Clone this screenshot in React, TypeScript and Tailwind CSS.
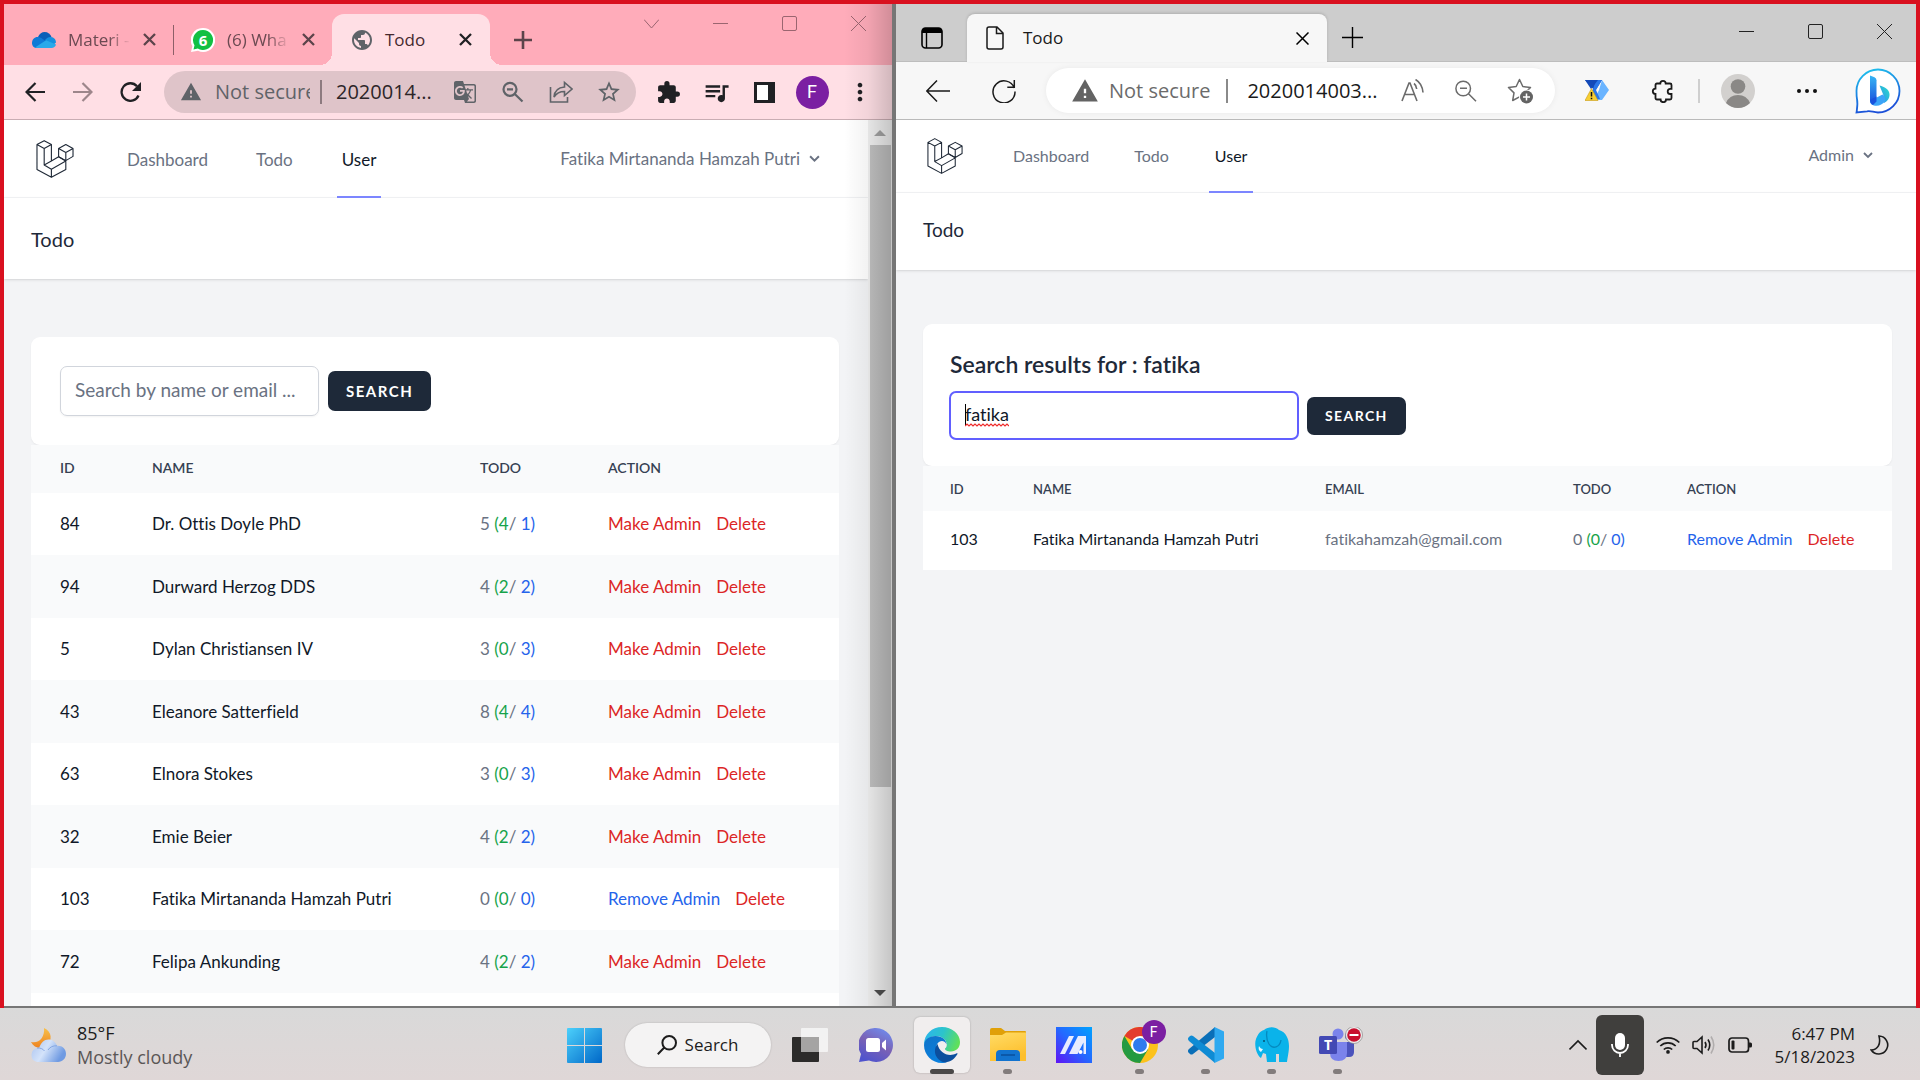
import React from 'react';
import { MdExtension, MdGTranslate, MdPublic, MdQueueMusic, MdStarBorder, MdWarning, MdMoreVert } from 'react-icons/md';

type IconProps = { className?: string };

function Stroke({ d, className, w = 1.5, box = 24 }: { d: string; className?: string; w?: number; box?: number }) {
  return (
    <svg viewBox={`0 0 ${box} ${box}`} className={className} fill="none" stroke="currentColor" strokeWidth={w} aria-hidden="true">
      <path d={d} />
    </svg>
  );
}

function Logo({ className }: IconProps) {
  return (
    <svg viewBox="0 0 114 116" className={className} fill="none" stroke="#1f2937" strokeWidth="3.4" strokeLinejoin="round" aria-hidden="true">
      <path d="M2 14 24 2l22 12-22 12zM2 14v76l44 24 44-24V64M24 26v50l22 13 44-25-22-13L46 64V14M46 89v25M24 76l22-12" />
      <path d="M68 26 90 14l22 12v24L90 63 68 51zM68 26l22 12 22-12M90 38v25" />
    </svg>
  );
}

function WindowControls({ chevron, className }: { chevron?: boolean; className: string }) {
  return (
    <div className={`flex h-[15px] items-center gap-[54px] ${className}`}>
      {chevron && <button aria-label="Search tabs"><Stroke box={15} w={1} d="M0 3.5 7.5 12 15 3.5" className="size-[15px]" /></button>}
      <button aria-label="Minimize"><Stroke box={15} w={1} d="M0 7.5h15" className="size-[15px]" /></button>
      <button aria-label="Maximize">
        <svg viewBox="0 0 15 15" className="size-[15px]" fill="none" stroke="currentColor" aria-hidden="true"><rect x=".5" y=".5" width="14" height="14" rx="1.500" /></svg>
      </button>
      <button aria-label="Close"><Stroke box={15} w={1} d="M0 0 15 15M15 0 0 15" className="size-[15px]" /></button>
    </div>
  );
}

function CloudIcon() {
  return (
    <svg viewBox="0 0 24 16" className="h-4 w-6 shrink-0" aria-hidden="true">
      <path d="M6 5C7.500 1.500 10 0 12.500 0c3.500 0 6 2 7 5l-7 6z" fill="#0a5fb8" />
      <path d="M0 11c0-3.500 2.500-6 5.500-6 2 0 3 .5 4.500 1.500L15 10l-9 6H5c-3 0-5-2-5-5z" fill="#0f7ad6" />
      <path d="M13 8c2-2.500 4-3.300 6-3 3 .3 5 2.700 5 5.500L20 14z" fill="#1490df" />
      <path d="M3 15.500 14 8.300l10 4.200c-.5 2-2.300 3.500-4.500 3.500H5c-.8 0-1.300-.2-2-.5z" fill="#29a9ea" />
    </svg>
  );
}

function ChatBadge() {
  return (
    <svg viewBox="0 0 24 24" className="size-6 shrink-0" aria-hidden="true">
      <path d="M12 0a12 12 0 1 1-5 22.800L0 24l1.400-6A12 12 0 0 1 12 0z" fill="#fff" />
      <path d="M12 2a10 10 0 1 1-5.200 18.500L2.500 21.500l1-4.300A10 10 0 0 1 12 2z" fill="#12c043" />
      <text x="12" y="17.500" fontSize="15" fontWeight="700" fill="#fff" textAnchor="middle" fontFamily="Open Sans">6</text>
    </svg>
  );
}

function ChromeTab({ icon, title, active }: { icon: React.ReactNode; title: string; active?: boolean }) {
  return (
    <div
      className={
        active
          ? "relative flex h-full w-[158px] items-center rounded-t-xl bg-[#ffdfe5] px-[18px] text-[#45292f] before:absolute before:bottom-0 before:-left-3 before:size-3 before:bg-[radial-gradient(circle_at_0_0,transparent_12px,#ffdfe5_12px)] before:content-[''] after:absolute after:-right-3 after:bottom-0 after:size-3 after:bg-[radial-gradient(circle_at_100%_0,transparent_12px,#ffdfe5_12px)] after:content-['']"
          : 'flex h-full w-[158px] items-center px-[17px] text-[#6c4a52]'
      }
    >
      <span className="flex w-6 shrink-0 justify-center">{icon}</span>
      <span className={active ? 'ml-[11px] flex-1 text-[17px]' : 'ml-3 flex-1 text-[17px] whitespace-nowrap [mask-image:linear-gradient(to_right,black_65%,transparent)]'}>{title}</span>
      <button aria-label={`Close ${title}`} className={active ? 'ml-2 text-[#202124]' : 'ml-3 text-[#5c434a]'}>
        <Stroke box={13} w={2.300} d="M1 1l11 11M12 1 1 12" className="size-[13px]" />
      </button>
    </div>
  );
}

function ChromeBar() {
  const slot = 'flex w-12 shrink-0 items-center justify-center';
  return (
    <header className="shrink-0 font-['Open_Sans',sans-serif]">
      <div className="flex h-[61px] bg-[#ffacba] pt-[10px] pl-[11px]">
        <ChromeTab icon={<CloudIcon />} title="Materi -" />
        <div className="h-[30px] w-px self-center bg-[#8d5f68]" />
        <ChromeTab icon={<ChatBadge />} title="(6) Wha" />
        <ChromeTab active icon={<MdPublic className="size-[26px] text-[#5f6368]" />} title="Todo" />
        <button aria-label="New tab" className="ml-6 self-center text-[#5c434a]">
          <Stroke box={18} w={2.600} d="M9 0v18M0 9h18" className="size-[18px]" />
        </button>
        <WindowControls chevron className="mt-[2px] mr-[26px] ml-auto text-[#9a6570]" />
      </div>
      <div className="flex h-[55px] items-center border-b border-[#c9adb3] bg-[#ffdfe5] pr-2 pl-[7px] text-[#202124]">
        <button aria-label="Back" className={slot}><Stroke box={20} w={2.200} d="M20 10H2M10.500 1 1.500 10l9 9" className="size-5" /></button>
        <button aria-label="Forward" className={`${slot} text-[#9d868b]`}><Stroke box={20} w={2.200} d="M0 10h18M9.500 1l9 9-9 9" className="size-5" /></button>
        <button aria-label="Reload" className={slot}>
          <svg viewBox="0 0 22 20" className="h-5 w-[22px]" fill="none" aria-hidden="true">
            <path d="M18.500 13.500A8.800 8.800 0 1 1 17 4.200" stroke="currentColor" strokeWidth="2.300" /><path d="M21 0v9h-9z" fill="currentColor" />
          </svg>
        </button>
        <div className="mr-2 ml-[9px] flex h-[42px] min-w-0 flex-1 items-center rounded-full bg-[#dfc4c9] pr-[3px] pl-4 text-xl text-[#5f6368]">
          <MdWarning className="size-[22px] shrink-0" />
          <span className="ml-[13px] w-[95px] shrink-0 overflow-hidden whitespace-nowrap">Not secure</span>
          <span className="mx-[10px] h-6 w-[2px] shrink-0 bg-[#8d7a7f]" />
          <input aria-label="Address" readOnly value="2020014..." className="ml-1 w-0 min-w-0 flex-1 bg-transparent text-[#2c2528] outline-none" />
          <button aria-label="Translate" className={slot}><MdGTranslate className="size-6" /></button>
          <button aria-label="Zoom" className={slot}><Stroke box={22} w={2.200} d="M14.500 8.300a6.500 6.500 0 1 1-13 0 6.500 6.500 0 0 1 13 0zM12.800 13l7.700 7.500M5 8.300h6" className="size-[22px]" /></button>
          <button aria-label="Share" className={slot}><Stroke box={24} w={1.600} d="M1.500 7v15h17v-5M5 17c.5-6 4-9.500 10.500-10V2.500L23 9l-7.500 6.500V11.500C11 11.500 7.500 13 5 17z" className="size-6" /></button>
          <button aria-label="Bookmark" className={slot}><MdStarBorder className="size-[26px]" /></button>
        </div>
        <button aria-label="Extensions" className={slot}><MdExtension className="size-[25px]" /></button>
        <button aria-label="Media" className={slot}><MdQueueMusic className="size-[29px]" /></button>
        <button aria-label="Side panel" className={slot}><span className="h-[21px] w-[21px] border-[3px] border-r-[7px] border-[#202124] bg-white" /></button>
        <button aria-label="Profile" className={slot}><span className="flex size-[33px] items-center justify-center rounded-full bg-[#7b1fa2] font-['Roboto'] text-lg text-white">F</span></button>
        <button aria-label="Menu" className={slot}><MdMoreVert className="size-7" /></button>
      </div>
    </header>
  );
}

function EdgeBar() {
  return (
    <header className="shrink-0 font-['Open_Sans',sans-serif]">
      <div className="flex h-[58px] border-b border-[#bdbdbd] bg-[#cdcdcd] pt-[10px] pl-[25px]">
        <button aria-label="Tab actions" className="mr-6 self-center">
          <svg viewBox="0 0 22 22" className="size-[22px]" fill="none" aria-hidden="true">
            <rect x="1" y="1" width="20" height="20" rx="3.500" stroke="#000" strokeWidth="1.600" /><path d="M1 6V4q0-3 3-3h14q3 0 3 3v2z" fill="#000" /><path d="M5.500 6v15" stroke="#000" strokeWidth="1.400" />
          </svg>
        </button>
        <div className="relative -mb-px flex w-[360px] items-center rounded-t-lg bg-[#f7f7f7] pr-[18px] pl-[19px] shadow-[0_-1px_3px_rgba(0,0,0,0.15)]">
          <svg viewBox="0 0 18 24" className="h-6 w-[18px]" fill="none" stroke="#1a1a1a" strokeWidth="1.500" aria-hidden="true">
            <path d="M1 3q0-2 2-2h8l6 6v14q0 2-2 2H3q-2 0-2-2zM10.500 1v6.500H17" />
          </svg>
          <span className="ml-[19px] flex-1 text-[17px] text-[#1a1a1a]">Todo</span>
          <button aria-label="Close tab"><Stroke box={13} w={1.500} d="M.5.5l12 12M12.500.5l-12 12" className="size-[13px]" /></button>
        </div>
        <button aria-label="New tab" className="ml-[15px] self-center"><Stroke box={21} w={1.400} d="M10.500 0v21M0 10.500h21" className="size-[21px]" /></button>
        <WindowControls className="mt-[10px] mr-6 ml-auto text-[#222]" />
      </div>
      <div className="flex h-[58px] items-center border-b border-[#bababa] bg-[#f7f7f7] pr-[15px] pl-[30px] text-[#1a1a1a]">
        <button aria-label="Back"><Stroke d="M24 12H1M11 1.500.8 12 11 22.500" className="size-6" /></button>
        <button aria-label="Refresh" className="ml-[42px]"><Stroke d="M22.300 9A11 11 0 1 0 23 12.500M22.300 1v7.200h-7" className="size-6" /></button>
        <div className="ml-[30px] flex h-[45px] min-w-0 flex-1 items-center rounded-full bg-white pr-[22px] pl-[25px] text-xl text-[#6b6b6b] shadow-[0_0_6px_rgba(0,0,0,0.06)]">
          <MdWarning className="size-7 shrink-0 text-[#636363]" />
          <span className="ml-[10px] shrink-0 whitespace-nowrap">Not secure</span>
          <span className="mx-4 h-6 w-[2px] shrink-0 bg-[#8a8a8a]" />
          <input aria-label="Address" readOnly value="2020014003..." className="ml-[3px] w-0 min-w-0 flex-1 bg-transparent text-[#1a1a1a] outline-none" />
          <button aria-label="Read aloud" className="ml-4"><Stroke w={1.600} d="M1 22 8 4h1l7 18M3.700 15.500h9.600M13 4.500c2 1.500 2.500 3.300 2.700 5.500M14.500.5c4.500 2.500 7 7 7.500 13" className="size-6" /></button>
          <button aria-label="Zoom out" className="ml-[30px]"><Stroke box={22} w={1.500} d="M15.500 8.500a7.300 7.300 0 1 1-14.600 0 7.300 7.300 0 0 1 14.600 0zM13.500 13.700l7.500 7.500M5 8.200h7" className="size-[22px]" /></button>
          <button aria-label="Add to favorites" className="ml-[30px]">
            <svg viewBox="0 0 26 26" className="size-[26px]" fill="none" aria-hidden="true">
              <path d="m12.500 1.500 3.300 7 7.700 1-5.600 5.400 1.300 7.600-6.700-3.700-6.800 3.700 1.300-7.600L1.500 9.500l7.700-1z" stroke="#6b6b6b" strokeWidth="1.500" strokeLinejoin="round" />
              <circle cx="19.500" cy="19" r="7.500" fill="#fff" /><circle cx="19.500" cy="19" r="6.500" fill="#636363" /><path d="M19.500 15.500v7M16 19h7" stroke="#fff" strokeWidth="1.500" />
            </svg>
          </button>
        </div>
        <button aria-label="Power Automate" className="ml-[30px]">
          <svg viewBox="0 0 24 22" className="h-[22px] w-6" aria-hidden="true">
            <path d="M0 0h17l-7 11z" fill="#1349b8" /><path d="M17 0 24 10 17 20H9l5-10z" fill="#6ab4ff" /><path d="M11 0h6l-6 10 4 9H9L3 20 8 9z" fill="#2b77e8" /><path d="M0 0h13L6 9z" fill="#1349b8" />
            <path d="M6.500 8.500 13 20.500H0z" fill="#f7cf33" stroke="#c99a10" strokeWidth=".6" /><path d="M6.500 12v4.500M6.500 17.700v1.500" stroke="#111" strokeWidth="1.500" />
          </svg>
        </button>
        <button aria-label="Extensions" className="ml-[42px]"><Stroke w={1.800} d="M9.300 4.500a2.700 2.700 0 0 1 5.400 0H19q1.500 0 1.500 1.500v3.800h-1.200a2.600 2.600 0 0 0 0 5.200h1.200V19q0 1.500-1.500 1.500h-4a2.700 2.700 0 0 1-5.400 0H6q-1.500 0-1.500-1.500v-4a2.700 2.700 0 0 1 0-5.400V6q0-1.500 1.500-1.500z" className="size-6" /></button>
        <span className="ml-[23px] h-6 w-[2px] bg-[#cfcfcf]" />
        <button aria-label="Profile" className="ml-[21px]">
          <svg viewBox="0 0 34 34" className="size-[34px]" aria-hidden="true">
            <circle cx="17" cy="17" r="17" fill="#d2d0ce" /><circle cx="17" cy="12.500" r="7.300" fill="#8a8886" /><path d="M5 29a13 13 0 0 1 24 0 17 17 0 0 1-24 0z" fill="#8a8886" />
          </svg>
        </button>
        <button aria-label="Settings" className="ml-[42px] flex gap-1"><i className="size-1 rounded-full bg-[#111]" /><i className="size-1 rounded-full bg-[#111]" /><i className="size-1 rounded-full bg-[#111]" /></button>
        <button aria-label="Bing chat" className="ml-[38px]">
          <svg viewBox="0 0 46 46" className="size-[46px]" aria-hidden="true">
            <defs>
              <linearGradient id="ring" x1="0" y1="0" x2=".3" y2="1"><stop stopColor="#1ec8ee" /><stop offset="1" stopColor="#1b4fd8" /></linearGradient>
              <linearGradient id="bee" x1="0" y1="0" x2="0" y2="1"><stop stopColor="#36b6f5" /><stop offset="1" stopColor="#1a52dc" /></linearGradient>
              <linearGradient id="swash" x1="0" y1="1" x2="1" y2="0"><stop stopColor="#2a8bf2" /><stop offset="1" stopColor="#2be0c8" /></linearGradient>
            </defs>
            <path d="M23 1.500a21.500 21.500 0 1 1 0 43c-5-.2-7-2-11-1.200L1.500 44.500C2.500 38 3 36 2 31c-.5-2.500-.5-5-.5-8A21.500 21.500 0 0 1 23 1.500z" fill="#fff" stroke="url(#ring)" strokeWidth="1.800" />
            <path d="m15 7.500 4.500 1.800q2 1 2 3v19L15 34.500z" fill="url(#bee)" />
            <path d="M24.500 17.500c5 1.500 9.500 3.500 10 8.500.3 4.500-2 7-5.500 9l-2-5 2-1.500z" fill="url(#swash)" />
            <path d="M15 33 27.500 26.500c2 1 3.500 4 2.500 7-2.500 2.500-5 4.300-8.500 4.300-4 0-6.500-2-6.500-4.800z" fill="#3ba4f8" /><path d="m15 32 6.500-3.500v5L18 37q-3-1.500-3-5z" fill="#1a52dc" />
          </svg>
        </button>
      </div>
    </header>
  );
}

type User = { id: number; name: string; email?: string; counts: [number, number, number]; admin?: boolean };

const users: User[] = [
  { id: 84, name: 'Dr. Ottis Doyle PhD', counts: [5, 4, 1] },
  { id: 94, name: 'Durward Herzog DDS', counts: [4, 2, 2] },
  { id: 5, name: 'Dylan Christiansen IV', counts: [3, 0, 3] },
  { id: 43, name: 'Eleanore Satterfield', counts: [8, 4, 4] },
  { id: 63, name: 'Elnora Stokes', counts: [3, 0, 3] },
  { id: 32, name: 'Emie Beier', counts: [4, 2, 2] },
  { id: 103, name: 'Fatika Mirtananda Hamzah Putri', counts: [0, 0, 0], admin: true },
  { id: 72, name: 'Felipa Ankunding', counts: [4, 2, 2] },
];

function TodoCount({ counts }: { counts: [number, number, number] }) {
  return (
    <>
      {counts[0]} <span className="text-[#16a34a]">({counts[1]}</span>/ <span className="text-[#2563eb]">{counts[2]})</span>
    </>
  );
}

function Actions({ admin, gap }: { admin?: boolean; gap: string }) {
  return (
    <div className={`flex whitespace-nowrap ${gap}`}>
      {admin ? <button className="text-[#2563eb]">Remove Admin</button> : <button className="text-[#dc2626]">Make Admin</button>}
      <button className="text-[#dc2626]">Delete</button>
    </div>
  );
}

function Chevron({ className }: IconProps) {
  return <Stroke box={10} w={1.800} d="M1 3l4 4 4-4" className={className} />;
}

function LeftPage() {
  return (
    <div className="flex min-h-0 flex-1 font-['Lato',sans-serif] [font-variant-ligatures:none]">
      <div className="min-w-0 flex-1 overflow-hidden bg-gray-100">
        <nav className="flex h-[78px] border-b border-gray-100 bg-white pr-[48px] pl-8 text-[17px] text-gray-500">
          <Logo className="mt-[20px] size-[38px]" />
          <div className="ml-[49px] flex gap-[38px]">
            <a href="#dashboard" className="flex items-center px-[4px] pt-[3px]">Dashboard</a>
            <a href="#todo" className="flex items-center px-[6px] pt-[3px]">Todo</a>
            <a href="#user" className="-mb-px flex items-center border-b-2 border-indigo-400 px-[5px] pt-[3px] text-gray-900">User</a>
          </div>
          <button className="ml-auto flex items-center gap-[9px]">Fatika Mirtananda Hamzah Putri <Chevron className="size-[11px]" /></button>
        </nav>
        <div className="flex h-[81px] items-center bg-white px-[27px] shadow"><h2 className="text-xl text-gray-800">Todo</h2></div>
        <main className="px-[27px] pr-[29px] pt-[58px]">
          <form className="flex h-[108px] items-center gap-[9px] rounded-[9px] bg-white px-[29px] shadow-xs">
            <input aria-label="Search users" placeholder="Search by name or email ..." className="h-[50px] w-[259px] rounded-[7px] border border-gray-300 px-[14px] pb-[3px] text-[19px] shadow-xs placeholder:text-gray-500" />
            <button type="button" className="h-10 rounded-[7px] bg-gray-800 px-[18px] text-[15px] font-bold tracking-widest text-white uppercase">Search</button>
          </form>
          <table className="w-full table-fixed text-left text-[17px] text-gray-500">
            <thead className="bg-gray-50 text-sm text-gray-700 uppercase">
              <tr className="h-12">
                <th className="w-[92px] px-[29px] pb-[3px] font-semibold">Id</th>
                <th className="px-[29px] pb-[3px] font-semibold">Name</th>
                <th className="w-[128px] px-[29px] pb-[3px] font-semibold">Todo</th>
                <th className="w-[260px] px-[29px] pb-[3px] font-semibold">Action</th>
              </tr>
            </thead>
            <tbody>
              {users.map((u) => (
                <tr key={u.id} className="h-[62px] odd:bg-white even:h-[63px] even:bg-gray-50">
                  <td className="px-[29px] text-gray-900">{u.id}</td>
                  <td className="px-[29px] whitespace-nowrap text-gray-900">{u.name}</td>
                  <td className="px-[29px] whitespace-nowrap"><TodoCount counts={u.counts} /></td>
                  <td className="px-[29px]"><Actions admin={u.admin} gap="gap-[15px]" /></td>
                </tr>
              ))}
              <tr className="h-[62px] bg-white"><td colSpan={4} /></tr>
            </tbody>
          </table>
        </main>
      </div>
      <div className="flex w-6 shrink-0 flex-col items-center bg-[#f1f1f1] py-[10px]">
        <svg viewBox="0 0 12 6" className="h-[6px] w-3"><path d="M0 6 6 0l6 6z" fill="#a3a3a3" /></svg>
        <div className="mt-[9px] h-[642px] w-[21px] bg-[#c1c1c1]" />
        <svg viewBox="0 0 12 6" className="mt-auto h-[6px] w-3"><path d="M0 0h12L6 6z" fill="#505050" /></svg>
      </div>
    </div>
  );
}

function RightPage() {
  return (
    <div className="min-h-0 flex-1 overflow-hidden bg-gray-100 font-['Lato',sans-serif] [font-variant-ligatures:none]">
      <nav className="flex h-[73px] border-b border-gray-100 bg-white pr-[43px] pl-[31px] text-base text-gray-500">
        <Logo className="mt-[18px] size-[36px]" />
        <div className="ml-[45px] flex gap-[35px]">
          <a href="#dashboard" className="flex items-center px-[5px]">Dashboard</a>
          <a href="#todo" className="flex items-center px-[5px]">Todo</a>
          <a href="#user" className="-mb-px flex items-center border-b-2 border-indigo-400 px-[6px] text-gray-900">User</a>
        </div>
        <button className="ml-auto flex items-center gap-[9px] pb-[2px]">Admin <Chevron className="size-[10px]" /></button>
      </nav>
      <div className="flex h-[77px] items-center bg-white px-[27px] pb-[3px] shadow"><h2 className="text-[19px] text-gray-800">Todo</h2></div>
      <main className="pr-6 pl-[27px] pt-[54px]">
        <form className="h-[142px] rounded-[9px] bg-white px-[27px] pt-6 shadow-xs">
          <h2 className="text-[23px] leading-8 font-semibold text-gray-800">Search results for : fatika</h2>
          <div className="mt-[11px] -ml-px flex items-center gap-2">
            <div className="relative">
              <input aria-label="Search users" defaultValue="fatika" spellCheck={false} className="block h-[49px] w-[350px] rounded-[7px] border-2 border-indigo-500 px-[14px] pb-[3px] text-lg text-gray-900 outline-none" />
              <span className="absolute top-[13px] left-4 h-[22px] w-px bg-black" />
              <svg viewBox="0 0 44 4" className="absolute top-[32px] left-4 h-1 w-11" fill="none" stroke="#ef2b2b" strokeWidth="1.200" aria-hidden="true">
                <path d="M0 3l2-2 2 2 2-2 2 2 2-2 2 2 2-2 2 2 2-2 2 2 2-2 2 2 2-2 2 2 2-2 2 2 2-2 2 2 2-2 2 2 2-2 2 2" />
              </svg>
            </div>
            <button type="button" className="h-[38px] rounded-[7px] bg-gray-800 px-[18px] text-sm font-bold tracking-widest text-white uppercase">Search</button>
          </div>
        </form>
        <table className="w-full table-fixed text-left text-base text-gray-500">
          <thead className="bg-gray-50 text-[13px] text-gray-700 uppercase">
            <tr className="h-[45px]">
              <th className="w-[83px] px-[27px] pt-[2px] font-semibold">Id</th>
              <th className="w-[292px] px-[27px] pt-[2px] font-semibold">Name</th>
              <th className="px-[27px] pt-[2px] font-semibold">Email</th>
              <th className="w-[114px] px-[27px] pt-[2px] font-semibold">Todo</th>
              <th className="w-[232px] px-[27px] pt-[2px] font-semibold">Action</th>
            </tr>
          </thead>
          <tbody>
            <tr className="h-[59px] bg-white">
              <td className="px-[27px] pb-[3px] text-gray-900">103</td>
              <td className="px-[27px] pb-[3px] whitespace-nowrap text-gray-900">Fatika Mirtananda Hamzah Putri</td>
              <td className="px-[27px] pb-[3px]">fatikahamzah@gmail.com</td>
              <td className="px-[27px] pb-[3px] whitespace-nowrap"><TodoCount counts={[0, 0, 0]} /></td>
              <td className="px-[27px] pb-[3px]"><Actions admin gap="gap-[15px]" /></td>
            </tr>
          </tbody>
        </table>
      </main>
    </div>
  );
}

function TaskSlot({ label, running, active, children }: { label: string; running?: boolean; active?: boolean; children: React.ReactNode }) {
  return (
    <button aria-label={label} className="relative flex h-[70px] w-[66px] items-center justify-center">
      {active && <span className="absolute inset-x-[5px] top-[7px] h-14 rounded-md bg-[#f1eeee] shadow-[0_0_2px_rgba(0,0,0,0.25)]" />}
      <span className="relative">{children}</span>
      {running && <span className="absolute top-[59px] h-[5px] w-[9px] rounded-full bg-[#827c7c]" />}
      {active && <span className="absolute top-[59px] h-[5px] w-6 rounded-full bg-[#4a4848]" />}
    </button>
  );
}

function Taskbar() {
  return (
    <footer className="grid h-[72px] shrink-0 grid-cols-[1fr_auto_1fr] bg-[linear-gradient(to_bottom,#d9d9d9,#dfd7d7)] pt-[2px] font-['Open_Sans',sans-serif] text-[#1c1c1c]">
      <button className="flex items-center gap-[11px] pl-[30px] text-left">
        <svg viewBox="0 0 36 36" className="size-9" aria-hidden="true">
          <defs>
            <linearGradient id="moon" x1="0" y1="0" x2="0" y2="1"><stop stopColor="#f8c04a" /><stop offset="1" stopColor="#ee8320" /></linearGradient>
            <linearGradient id="cloud" x1="0" y1="0" x2="1" y2=".4"><stop stopColor="#a9c2ef" /><stop offset=".5" stopColor="#d4e3fa" /><stop offset="1" stopColor="#6f9ae2" /></linearGradient>
          </defs>
          <path d="M14 1c8 3 9 13 2 18-5 3.500-12 2-15-4 8 2 14-5 13-14z" fill="url(#moon)" />
          <path d="M7 35a7.200 7.200 0 0 1 0-14c1 0 1.500 0 2 .2C11 15.500 14 12.500 18.500 12.500c4 0 7 2.500 8.500 6.300 5-.5 9 3 9 8 0 4.700-3.500 8.200-8 8.200z" fill="url(#cloud)" />
          <path d="M7 21c4-.2 6 1 7.500 3M18 23c2-3 5-4.500 9-4.200" fill="none" stroke="#86a8e3" strokeWidth="1" />
        </svg>
        <span className="flex flex-col text-lg leading-6"><span>85°F</span><span className="text-[#5a5656]">Mostly cloudy</span></span>
      </button>

      <div className="flex items-center pl-[2px]">
        <TaskSlot label="Start">
          <svg viewBox="0 0 35 35" className="size-[35px]" aria-hidden="true">
            <defs><linearGradient id="win" x1="0" y1="0" x2="1" y2="1"><stop stopColor="#4cd0fb" /><stop offset="1" stopColor="#0067c8" /></linearGradient></defs>
            <path d="M1 0h16v17H0V1q0-1 1-1zM18 0h16q1 0 1 1v16H18zM0 18h17v17H1q-1 0-1-1zM18 18h17v16q0 1-1 1H18z" fill="url(#win)" />
          </svg>
        </TaskSlot>
        <button className="mr-[6px] ml-[7px] flex h-11 w-[146px] items-center justify-center gap-2 rounded-full bg-[#f4f3f3] text-[17px] shadow-[0_0_2px_rgba(0,0,0,0.2)]">
          <Stroke box={20} w={2} d="M19 7.800a6.800 6.800 0 1 1-13.600 0 6.800 6.800 0 0 1 13.600 0zM7.300 12.500.8 19.200" className="size-5" />
          Search
        </button>
        <TaskSlot label="Task view">
          <svg viewBox="0 0 36 34" className="h-[34px] w-9" aria-hidden="true"><rect y="9" width="27" height="25" rx="1" fill="#2c2b2a" /><rect x="9" width="27" height="24" rx="1" fill="#f3f3f3" opacity=".95" /><path d="M9 9h18v15H9z" fill="#a5a4a3" /></svg>
        </TaskSlot>
        <TaskSlot label="Chat">
          <svg viewBox="0 0 34 34" className="size-[34px]" aria-hidden="true">
            <defs><linearGradient id="chat" x1=".8" y1="0" x2=".3" y2="1"><stop stopColor="#6f8df0" /><stop offset=".5" stopColor="#7a62b5" /><stop offset="1" stopColor="#4f53cd" /></linearGradient></defs>
            <path d="M17 0a17 17 0 1 1-7 32.500L0 34l2-8A17 17 0 0 1 17 0z" fill="url(#chat)" /><rect x="7" y="10" width="14" height="14" rx="2.500" fill="#fff" /><path d="m23 15 4-3.500v11L23 19z" fill="#fff" />
          </svg>
        </TaskSlot>
        <TaskSlot label="Edge" active>
          <svg viewBox="0 0 36 36" className="size-9" aria-hidden="true">
            <defs>
              <linearGradient id="e1" x1="0" y1=".2" x2="1" y2=".5"><stop stopColor="#2cb5ee" /><stop offset=".5" stopColor="#2cc4cb" /><stop offset="1" stopColor="#5fe05a" /></linearGradient>
              <linearGradient id="e2" x1="0" y1="0" x2=".4" y2="1"><stop stopColor="#1173c8" /><stop offset="1" stopColor="#0a80de" /></linearGradient>
            </defs>
            <path d="M0 18C0 7 8 0 18 0s18 7 18 15c0 6-4 9.500-9 9.500-4 0-6.500-1.500-6-3 1.500-1 1.800-2.500 1.800-4C22.500 12 17 9 12 9 6 9 2 12.500 0 18z" fill="url(#e1)" />
            <path d="M0 18C.5 12.500 5 9 11.500 9c6.500 0 11 4 11 8.500-1-3-3-3.500-4.500-3.500-4 0-6 4-6 8 0 7 4 11 11 13-2 .8-3.500 1-5 1C8 36 0 28 0 18z" fill="url(#e2)" />
            <path d="M13.500 17C9 22 10 33 21 35.500c6-.8 10-4 12.500-8.500.3-.8-.2-1-.8-.7-8 4.200-17 .2-19.200-9.300z" fill="#0c4f9e" />
          </svg>
        </TaskSlot>
        <TaskSlot label="File Explorer" running>
          <svg viewBox="0 0 36 34" className="h-[34px] w-9" aria-hidden="true">
            <defs><linearGradient id="fold" x1="0" y1="0" x2=".4" y2="1"><stop stopColor="#ffdc66" /><stop offset="1" stopColor="#fdbf2d" /></linearGradient></defs>
            <path d="M0 2q0-2 2-2h9l4 3h20q1 0 1 1v5H0z" fill="#e0a008" /><path d="M0 7h12l4-2.500h20V33H0z" fill="url(#fold)" />
            <path d="M6 33v-7q0-4 4-4h16q4 0 4 4v7z" fill="#1273cf" /><path d="M11 27h14" stroke="#0a4f9c" strokeWidth="1.500" />
          </svg>
        </TaskSlot>
        <TaskSlot label="MyASUS">
          <svg viewBox="0 0 36 36" className="size-9" aria-hidden="true">
            <defs><linearGradient id="asus" x1="1" y1="0" x2="0" y2="1"><stop stopColor="#00a3ff" /><stop offset=".5" stopColor="#2468ff" /><stop offset="1" stopColor="#5f14f5" /></linearGradient></defs>
            <path d="M0 0h36v36H0z" fill="url(#asus)" /><path d="M4 27 13 9h5L9 27zM13 27 22 9h5L18 27zM26 9h4v18h-2.500V15.500L21.500 27H17z" fill="#e8ecff" /><circle cx="24.500" cy="25" r="2" fill="#fff" />
          </svg>
        </TaskSlot>
        <TaskSlot label="Chrome" running>
          <svg viewBox="0 0 36 36" className="size-9" aria-hidden="true">
            <circle cx="18" cy="18" r="18" fill="#fcc21b" /><path d="M18 18 2.400 9A18 18 0 0 1 33.600 9H18z" fill="#e33b2e" /><path d="M2.400 9A18 18 0 0 0 18 36l8-13.500L18 18l-8 4z" fill="#249a41" />
            <circle cx="18" cy="18" r="9" fill="#fff" /><circle cx="18" cy="18" r="7" fill="#2f7bee" />
          </svg>
          <span className="absolute -top-[7px] -right-2 flex size-6 items-center justify-center rounded-full bg-[#7b1fa2] font-['Roboto'] text-sm text-white">F</span>
        </TaskSlot>
        <TaskSlot label="Visual Studio Code" running>
          <svg viewBox="0 0 36 36" className="size-9" aria-hidden="true">
            <path d="m1 22 26-22v10L5 27q-1.500 1-3 0l-1.500-1.600Q-.8 23.800 1 22z" fill="#0a6fb8" /><path d="m1 14 26 22V26L5 9Q3.500 8 2 9L.5 10.500Q-.8 12.200 1 14z" fill="#0f8bd4" /><path d="m26.500 0 9.500 4.500v27L26.500 36z" fill="#2fa9f0" />
          </svg>
        </TaskSlot>
        <TaskSlot label="Laragon" running>
          <svg viewBox="0 0 34 36" className="h-9 w-[34px]" aria-hidden="true">
            <path d="M9 3c4-3.500 11-4 15 0 7 2 10 9 10 16 0 5-1 9-2 16h-8v-8h-3v8h-9l-1-8-3-1-2 5C1 28-1 17 1 12 3 7 5 4 9 3z" fill="#0ab3ea" />
            <path d="M12 4c-1 5-1 8 2 13 4 6 11 3 12-4" fill="none" stroke="#058abf" strokeWidth="1.300" /><path d="M4 19c1 2 2 3 4 3l-2 3c-2-1-3-3-2-6z" fill="#e8f8ff" /><circle cx="9" cy="14" r="1" fill="#04506f" />
          </svg>
        </TaskSlot>
        <TaskSlot label="Teams" running>
          <svg viewBox="-7 0 51 36" className="h-9 w-[51px]" aria-hidden="true">
            <circle cx="19" cy="7" r="5.500" fill="#7b83eb" /><path d="M26 15h9v10q0 5-5 5h-4z" fill="#4b53bc" /><circle cx="30" cy="9" r="4" fill="#4b53bc" /><path d="M11 15h17v11q0 8-8.500 8T11 26z" fill="#7b83eb" />
            <rect y="9" width="18" height="18" rx="1.500" fill="#4349b4" /><text x="9" y="23" fontSize="14" fontWeight="700" fill="#fff" textAnchor="middle" fontFamily="Open Sans">T</text>
            <circle cx="35" cy="8" r="8.500" fill="#eee" stroke="#888" strokeWidth=".7" /><circle cx="35" cy="8" r="6.800" fill="#c8102e" /><path d="M30.500 8h9" stroke="#fff" strokeWidth="2" />
          </svg>
        </TaskSlot>
      </div>

      <div className="flex items-center justify-end gap-3 pr-[30px]">
        <button aria-label="Hidden icons" className="-mr-[3px]"><Stroke box={18} w={1.600} d="M.5 13.500 9 5l8.500 8.500" className="size-[18px]" /></button>
        <button aria-label="Microphone" className="flex h-[60px] w-12 items-center justify-center rounded-md bg-[#403f3d]">
          <svg viewBox="0 0 18 24" className="h-6 w-[18px]" fill="none" aria-hidden="true"><rect x="4" width="10" height="17" rx="5" fill="#fff" /><path d="M1 11v1a8 8 0 0 0 16 0v-1M9 20v4" stroke="#fff" strokeWidth="1.800" /></svg>
        </button>
        <Stroke w={1.700} d="M.7 9.500a16 16 0 0 1 22.600 0M4.300 13a11 11 0 0 1 15.400 0M7.800 16.500a6 6 0 0 1 8.400 0M12 18.800v.1m-1 0a1 1 0 1 0 2 0 1 1 0 1 0-2 0" className="size-6" />
        <svg viewBox="0 0 24 24" className="size-6" fill="none" stroke="currentColor" strokeWidth="1.600" aria-hidden="true"><path d="M1 9.500q0-1 1-1h3L10 4v16l-5-4.500H2q-1 0-1-1zM13 9q2 3 0 6M16 6.500q3.500 5.500 0 11" /><path d="M19 3.500q5.500 8.500 0 17" stroke="#b0adad" /></svg>
        <svg viewBox="0 0 24 16" className="h-4 w-6" fill="none" aria-hidden="true"><rect x="1" y="1" width="19.500" height="14" rx="3" stroke="#1c1c1c" strokeWidth="1.700" /><rect x="3.500" y="3.500" width="3" height="9" rx="1" fill="#1c1c1c" /><path d="M21 5.500h1.500q1.500 0 1.500 1.500v2q0 1.500-1.500 1.500H21z" fill="#1c1c1c" /></svg>
        <div className="w-[91px] text-right text-[17px] leading-[23px] whitespace-nowrap"><div>6:47 PM</div><div>5/18/2023</div></div>
        <Stroke box={20} w={1.600} d="M9 1a9 9 0 1 1-7.800 14C8 14.500 11 9 9 1z" className="ml-[3px] size-5" />
      </div>
    </footer>
  );
}

export default function App() {
  return (
    <div className="flex h-screen flex-col overflow-hidden bg-[#d9d9d9]">
      <div className="grid min-h-0 flex-1 grid-cols-[888fr_1024fr] grid-rows-[minmax(0,1fr)] border-x-4 border-t-4 border-[#d9101f]">
        <section aria-label="Chrome window" className="relative flex min-h-0 min-w-0 flex-col border-b-2 border-[#767676]">
          <ChromeBar />
          <LeftPage />
          <div className="pointer-events-none absolute inset-y-0 right-0 w-12 bg-[linear-gradient(to_right,transparent,rgba(0,0,0,0.05)_50%,rgba(0,0,0,0.18))]" />
        </section>
        <section aria-label="Edge window" className="flex min-h-0 min-w-0 flex-col border-b-2 border-l-4 border-[#767676]">
          <EdgeBar />
          <RightPage />
        </section>
      </div>
      <Taskbar />
    </div>
  );
}
